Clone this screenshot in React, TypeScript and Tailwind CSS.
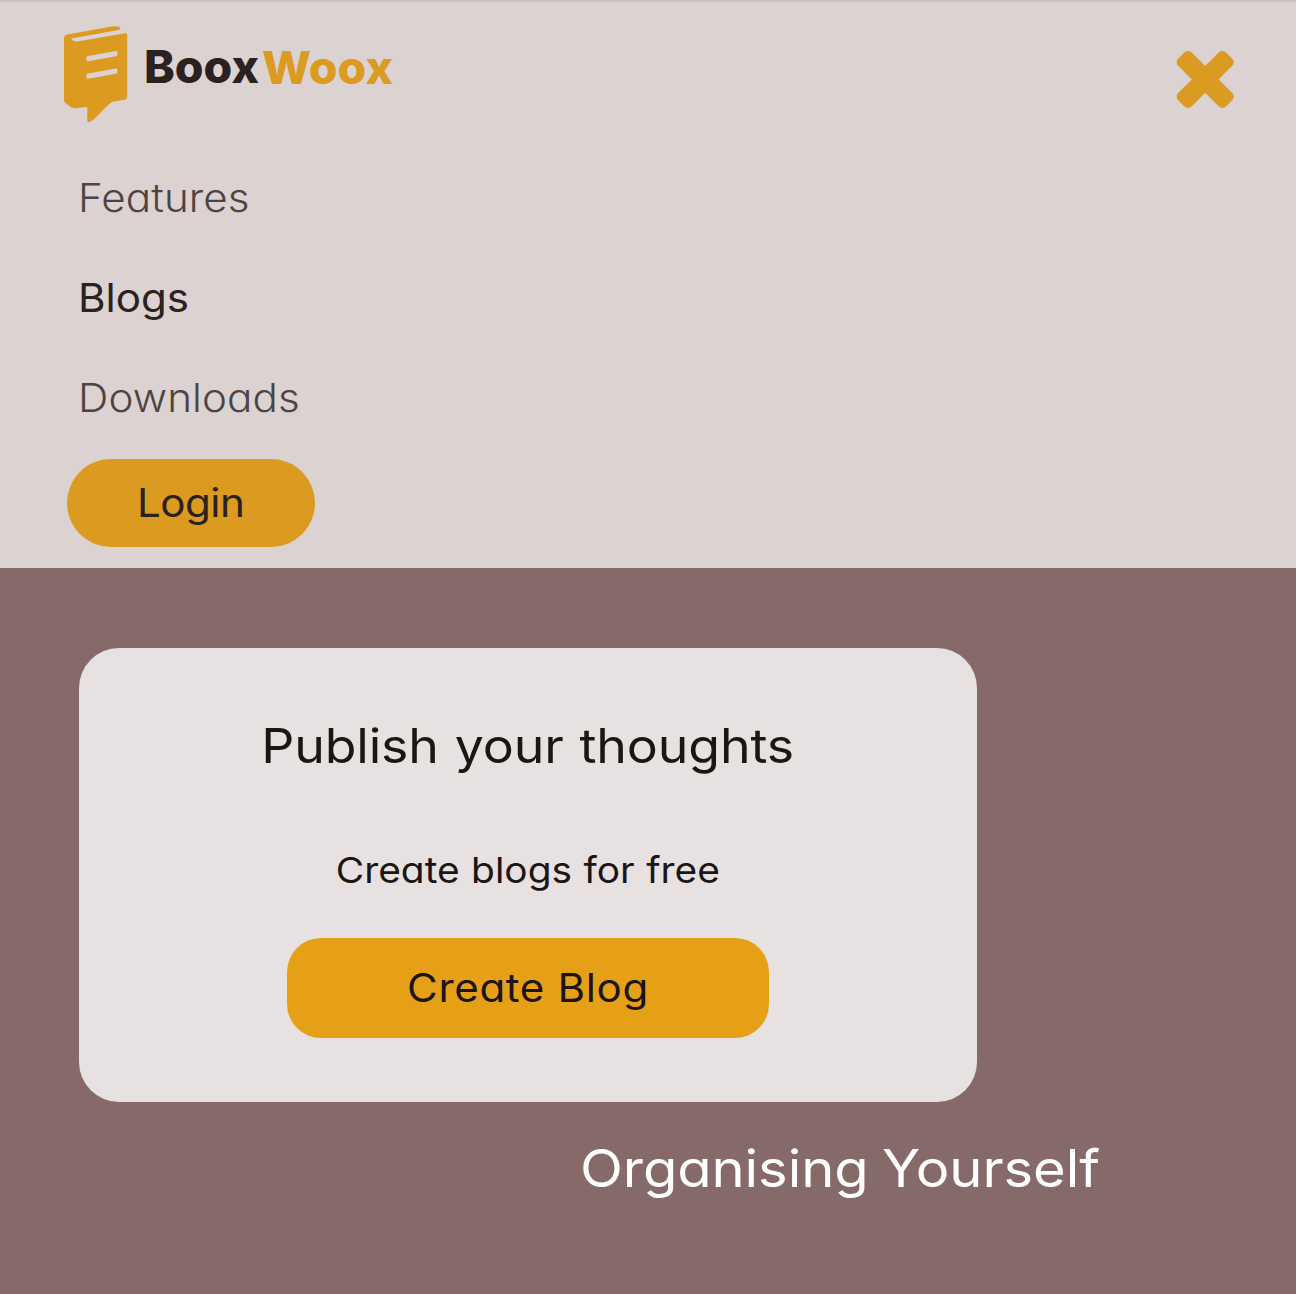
const text = "inline-block whitespace-nowrap scale-x-[1.08]";

function BookMark() {
  return (
    <svg className="block h-[98px] w-[64px]" viewBox="0 0.5 64 98" fill="#db9a20">
      <path d="M0 12.500Q0 9.600 3.500 8.900L46 1.200Q54.500-.3 56.200 2.500Q56.800 4 54.500 4.400L7 13Q9.500 16.500 13.500 16L61 7.800Q63.200 7.300 63.200 9.500V71.500Q63.200 73.400 59.500 74.400L49.500 76Q46.300 77 43.500 80L30 93.700Q23.700 98.600 23.300 95V81.500L12 82.600Q8.500 83 6 81L1.300 77.300Q0 76.300 0 75Z" />
      <path fill="#dbd2d1" d="M22.500 32.100Q22.500 30.900 23.800 30.600L52 25.600Q53.400 25.400 53.400 26.600V29.200Q53.400 30.400 52 30.700L24 35.700Q22.500 35.900 22.500 34.800ZM22.500 49.600Q22.500 48.400 23.800 48.100L52 43.100Q53.400 42.900 53.400 44.100V46.700Q53.400 47.900 52 48.200L24 53.200Q22.500 53.400 22.500 52.300Z" />
    </svg>
  );
}

function CloseIcon() {
  return (
    <svg className="block size-[58px]" viewBox="-29.200 -29.400 58 58" fill="#db9a20">
      <rect x="-33.800" y="-9.450" width="67.600" height="18.900" rx="5" transform="rotate(45)" />
      <rect x="-33.800" y="-9.450" width="67.600" height="18.900" rx="5" transform="rotate(-45)" />
    </svg>
  );
}

function Header() {
  return (
    <header className="h-[568px] border-t-2 border-[#c6c3c2] bg-[#dbd2d1]">
      <div className="flex h-[146px] items-start justify-between pt-6 pl-16 pr-[62px]">
        <a href="#" className="flex items-start" aria-label="BooxWoox">
          <BookMark />
          <span className="flex pt-[13px] pl-[16px] text-[45.5px] leading-[56px] font-extrabold">
            <span className="w-[118px] text-[#2b2120]">
              <span className="inline-block origin-left scale-x-[1.02]">Boox</span>
            </span>
            <span className="pt-px text-[#db9a20]">
              <span className="inline-block origin-left scale-x-[1.02]">Woox</span>
            </span>
          </span>
        </a>
        <button aria-label="Close menu" className="mt-[24px]">
          <CloseIcon />
        </button>
      </div>
      <nav className="flex flex-col items-start pl-[78px] text-[39px] leading-[100px]">
        <a href="#" className={`${text} origin-left font-light tracking-[0.1px] text-[#4d4342]`}>Features</a>
        <a href="#" className={`${text} origin-left text-[#2b2120]`}>Blogs</a>
        <a href="#" className={`${text} origin-left font-light tracking-[0.1px] text-[#4d4342]`}>Downloads</a>
      </nav>
      <button className="mt-[11px] ml-[67px] flex h-[88px] w-[248px] items-center justify-center rounded-full bg-[#db9a20] text-[39px] text-[#2b2120]">
        <span className={`${text} tracking-[-0.5px]`}>Login</span>
      </button>
    </header>
  );
}

export default function App() {
  return (
    <div className="h-[1294px] overflow-hidden bg-[#866969] font-['Inter',sans-serif] [font-feature-settings:'cv11']">
      <Header />
      <main>
        <section className="mt-20 ml-[79px] flex h-[454px] w-[898px] flex-col items-center rounded-[40px] bg-[#e7e1e1] pt-[63px] text-[#1b1514]">
          <h1 className={`${text} text-[48px] leading-[70px] tracking-[-0.15px] [word-spacing:1.5px]`}>Publish your thoughts</h1>
          <p className={`${text} mt-[61px] text-[36px] leading-[56px] [word-spacing:0.5px]`}>Create blogs for free</p>
          <button className="mt-[40px] flex h-[100px] w-[482px] items-center justify-center rounded-[34px] bg-[#e6a017] text-[39px]">
            <span className={`${text} tracking-[0.59px]`}>Create Blog</span>
          </button>
        </section>
        <h2 className={`${text} mt-[27px] ml-[580px] origin-left text-[52px] leading-[80px] tracking-[-0.1px] [word-spacing:-2px] text-white`}>
          Organising Yourself
        </h2>
      </main>
    </div>
  );
}
